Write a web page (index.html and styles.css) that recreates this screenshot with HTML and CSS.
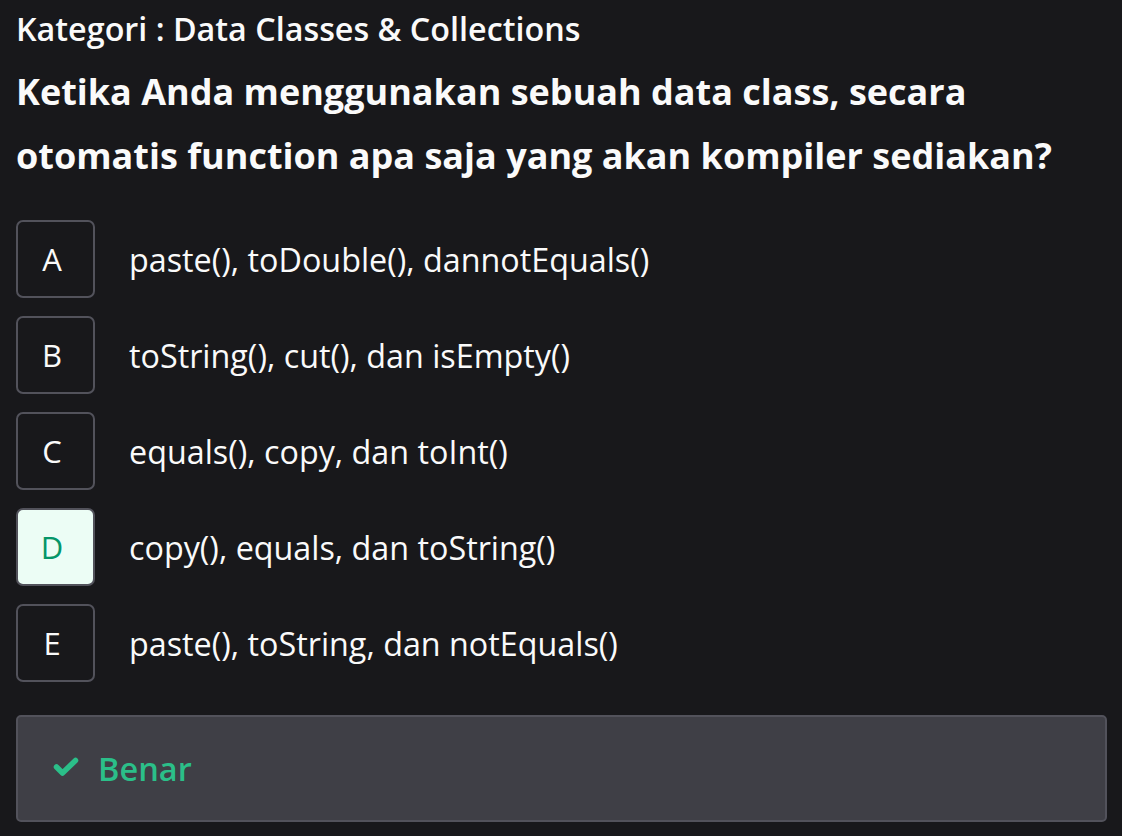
FILE: index.html
```html
<!DOCTYPE html>
<html lang="id">
<head>
<meta charset="utf-8">
<title>Kuis</title>
<link rel="stylesheet" href="styles.css">
</head>
<body>
<main class="quiz">
  <p class="category">Kategori : Data Classes &amp; Collections</p>
  <h1 class="question">Ketika Anda menggunakan sebuah data class, secara otomatis function apa saja yang akan kompiler sediakan?</h1>
  <ul class="options">
    <li class="option"><span class="letter">A</span><span class="text">paste(), toDouble(), dannotEquals()</span></li>
    <li class="option"><span class="letter">B</span><span class="text">toString(), cut(), dan isEmpty()</span></li>
    <li class="option"><span class="letter">C</span><span class="text">equals(), copy, dan toInt()</span></li>
    <li class="option selected"><span class="letter">D</span><span class="text">copy(), equals, dan toString()</span></li>
    <li class="option"><span class="letter">E</span><span class="text">paste(), toString, dan notEquals()</span></li>
  </ul>
  <div class="result">
    <svg class="check" width="26" height="20" viewBox="0 0 26 20"><polyline points="3.5,10 9.5,16 22.5,3.5" fill="none" stroke="#2bbf89" stroke-width="5.5" stroke-linecap="round" stroke-linejoin="round"/></svg>
    <span class="result-text">Benar</span>
  </div>
</main>
</body>
</html>
```
FILE: styles.css
```css
html, body {
  margin: 0;
  background: #18181b;
}
body {
  font-family: "Open Sans", "Noto Sans", sans-serif;
  color: #fafafa;
}
.quiz {
  padding: 0 15px 0 16px;
}
.category {
  margin: 0;
  font-size: 32.3px;
  font-weight: 600;
  line-height: 56px;
}
.question {
  margin: 4px 0 0;
  font-size: 36px;
  font-weight: 700;
  line-height: 64px;
}
.options {
  list-style: none;
  margin: 32px 0 0;
  padding: 0;
  display: flex;
  flex-direction: column;
  gap: 18px;
}
.option {
  display: flex;
  align-items: center;
  gap: 34px;
}
.letter {
  box-sizing: border-box;
  width: 79px;
  height: 78px;
  padding-right: 7px;
  border: 2px solid #52525b;
  border-radius: 7px;
  display: flex;
  align-items: center;
  justify-content: center;
  font-size: 31px;
  color: #fafafa;
}
.selected .letter {
  background: #ecfdf5;
  color: #059669;
}
.text {
  font-size: 32.3px;
}
.result {
  box-sizing: border-box;
  margin-top: 33px;
  height: 107px;
  border: 2px solid #52525b;
  border-radius: 5px;
  background: #3f3f46;
  display: flex;
  align-items: center;
  padding-left: 35px;
  gap: 19px;
}
.check {
  display: block;
  margin-top: -4px;
}
.result-text {
  font-size: 32.5px;
  font-weight: 600;
  color: #2bbf89;
}
```
